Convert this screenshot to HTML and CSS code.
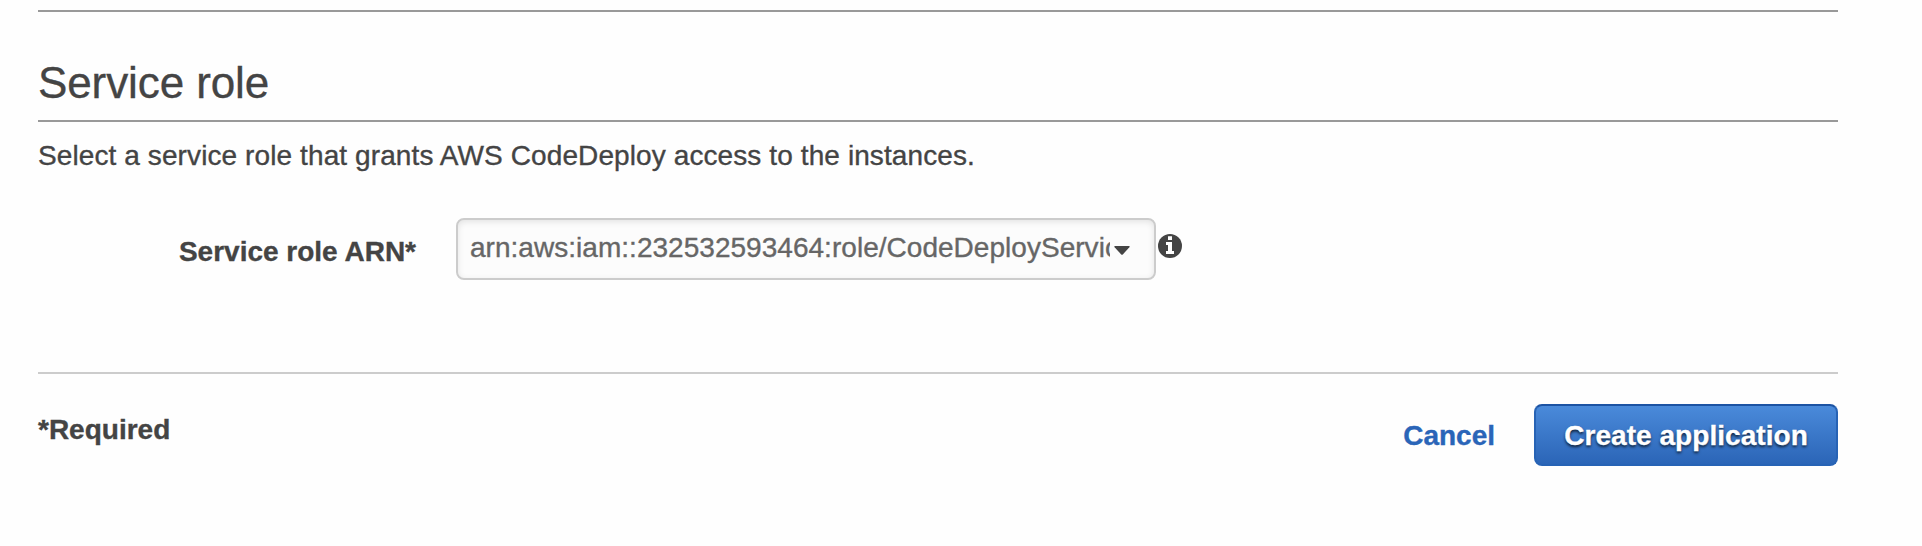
FILE: index.html
```html
<!DOCTYPE html>
<html lang="en">
<head>
<meta charset="utf-8">
<title>Create application</title>
<link rel="stylesheet" href="styles.css">
</head>
<body>
<main class="page">
  <section class="section">
    <h2 class="section-title"><span>Service role</span></h2>
    <p class="section-text"><span>Select a service role that grants AWS CodeDeploy access to the instances.</span></p>
    <div class="form-row">
      <label class="form-label" id="role-label">Service role ARN*</label>
      <div class="select" role="combobox" aria-expanded="false" aria-labelledby="role-label" tabindex="0">
        <span class="select-value">arn:aws:iam::232532593464:role/CodeDeployServic</span>
        <svg class="caret" viewBox="0 0 16 9" aria-hidden="true"><path d="M1 0H15Q16.4 0 15.4 1.2L9 8.2Q8 9.2 7 8.2L.6 1.2Q-.4 0 1 0Z"/></svg>
      </div>
      <svg class="info" viewBox="0 0 24 24" aria-hidden="true">
        <circle cx="12" cy="12" r="12" fill="#444"/>
        <path d="M10 2.2h4v3.8h-4zM8 8h6v9h2v3H8v-3h2v-6H8z" fill="#fff"/>
      </svg>
    </div>
  </section>
  <footer class="footer">
    <span class="required">*Required</span>
    <div class="actions">
      <a class="cancel">Cancel</a>
      <button class="primary" type="button"><span>Create application</span></button>
    </div>
  </footer>
</main>
</body>
</html>
```
FILE: styles.css
```css
* { box-sizing: border-box; }
body {
  margin: 0;
  background: #fefefe;
  color: #444;
  font: 28px/40px "Liberation Sans", Arial, sans-serif;
  -webkit-text-stroke: 0.35px currentColor;
}
.page { padding: 10px 84px 0 38px; }
.section {
  height: 362px;
  border-top: 2px solid #999;
}
.section-title {
  margin: 45px 0 0;
  padding-bottom: 11px;
  border-bottom: 2px solid #999;
  font-size: 44px;
  font-weight: 400;
  line-height: 52px;
  letter-spacing: -0.1px;
}
.section-text { margin: 14px 0 0; letter-spacing: 0.1px; }
.form-row {
  display: flex;
  align-items: flex-start;
  margin-top: 42px;
}
.form-label {
  width: 418px;
  padding: 14px 40px 0 0;
  text-align: right;
  white-space: nowrap;
  font-weight: 700;
}
.select {
  display: flex;
  align-items: center;
  width: 700px;
  height: 62px;
  padding: 0 24px 0 12px;
  border: 2px solid #ccc;
  border-radius: 8px;
  background: #fcfcfc;
  box-shadow: inset 0 2px 6px rgba(0, 0, 0, .1);
  color: #666;
}
.select-value {
  width: 640px;
  height: 40px;
  margin-top: -2px;
  overflow: hidden;
  white-space: nowrap;
  letter-spacing: 0.03px;
}
.caret {
  flex: none;
  width: 16px;
  height: 9px;
  margin: 3px 0 0 4px;
  fill: #444;
}
.info {
  width: 24px;
  height: 24px;
  margin: 16px 0 0 2px;
}
.footer {
  display: flex;
  justify-content: space-between;
  padding-top: 30px;
  border-top: 2px solid #ccc;
  font-weight: 700;
}
.required { margin-top: 6px; }
.actions { display: flex; align-items: center; gap: 39px; }
.cancel { padding-top: 1px; color: #2a65b8; }
.primary {
  width: 304px;
  height: 62px;
  padding: 1px 0 0;
  border: 2px solid #2763b5;
  border-top-color: #1c53a3;
  border-radius: 8px;
  background: linear-gradient(#4a8ada, #2b65b7);
  color: #fff;
  font: inherit;
  letter-spacing: 0.05px;
  text-shadow: 0 2px 3px rgba(0, 0, 0, .75);
  white-space: nowrap;
}
```
